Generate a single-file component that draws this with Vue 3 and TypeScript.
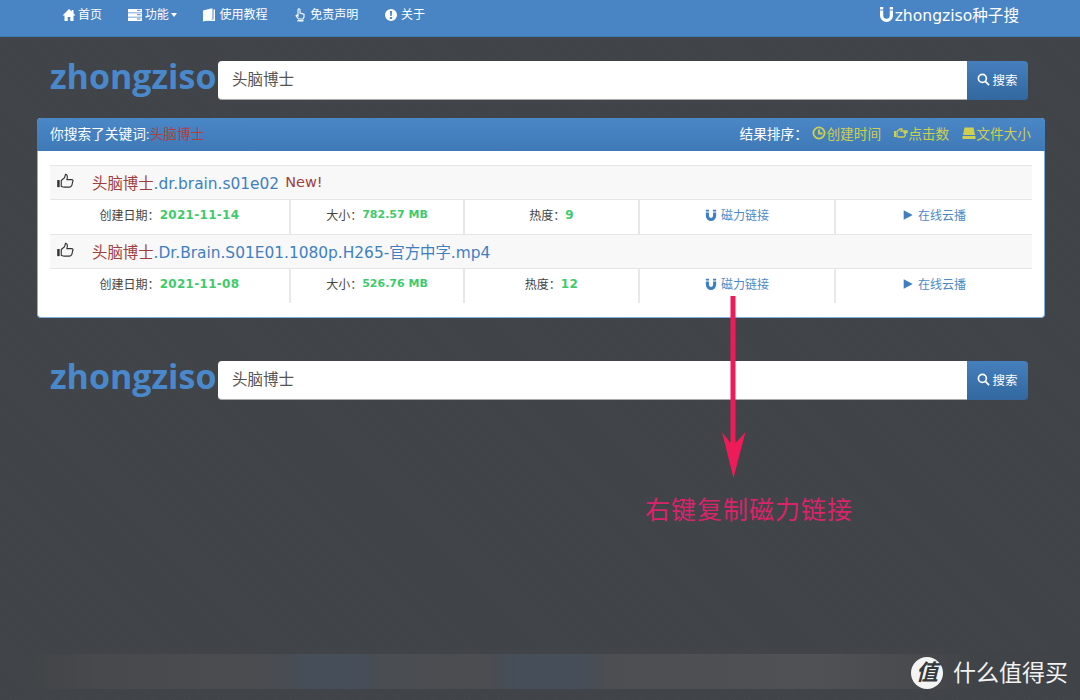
<script setup lang="ts">
interface Row {
  name: string
  isNew: boolean
  date: string
  size: string
  heat: number
}

const rows: Row[] = [
  { name: '.dr.brain.s01e02', isNew: true, date: '2021-11-14', size: '782.57 MB', heat: 9 },
  { name: '.Dr.Brain.S01E01.1080p.H265-官方中字.mp4', isNew: false, date: '2021-11-08', size: '526.76 MB', heat: 12 },
]
const keyword = '头脑博士'
</script>

<template>
  <div class="page">
    <nav class="navbar">
      <ul class="menu">
        <li>
          <svg class="ico" viewBox="0 0 14 14"><path d="M7 1 0.5 7.4h2V13h3.2V9h2.6v4h3.2V7.4h2L11.500 5.300V2h-1.800v1.500z" /></svg>首页
        </li>
        <li>
          <svg class="ico wide" viewBox="0 0 14 14"><path d="M0 1h14v3.400H0zM0 5.300h14v3.400H0zM0 9.600h14V13H0z" /><path class="cut" d="M9 2.300h3.500M9 6.700h3.500M9 11h3.500" /></svg>功能<i class="caret"></i>
        </li>
        <li>
          <svg class="ico wide" viewBox="0 0 14 14"><path d="M1 2.500 9 .5h1.500v11L1 13.500zM11.500 1.500H13v11.500H4l7.500-1.500z" /></svg>使用教程
        </li>
        <li>
          <svg class="ico wide" viewBox="0 0 14 14"><path class="line" d="M5 8V1.800a1 1 0 0 1 2 0V5l4 1.200V9l-1 2H5.500L3 7.800 4 7z" /><path d="M4.500 12h6v1.500h-6z" /></svg>免责声明
        </li>
        <li>
          <svg class="ico wide" viewBox="0 0 14 14"><path fill-rule="evenodd" d="M7 1a6 6 0 1 0 0 12A6 6 0 0 0 7 1zM5.900 3h2.200l-.4 5H6.300zM5.900 9h2.200v2H5.900z" /></svg>关于
        </li>
      </ul>
      <div class="brand">
        <svg class="brand-ico" viewBox="0 0 14 16"><path d="M0 0h3.500v2.600H0zM10.500 0H14v2.600h-3.500zM0 3.600h3.500V9a3.500 3.500 0 0 0 7 0V3.600H14V9A7 7 0 0 1 0 9z" /></svg>zhongziso种子搜
      </div>
    </nav>

    <div class="search-row">
      <div class="logo">zhongziso</div>
      <div class="search-input">{{ keyword }}</div>
      <button class="search-btn">
        <svg class="btn-ico" viewBox="0 0 14 14" fill="none"><circle cx="5.800" cy="5.800" r="4.300" /><path d="m9 9 4 4" /></svg>搜索
      </button>
    </div>

    <section class="panel">
      <header class="panel-head">
        <div>你搜索了关键词:<span class="kw">{{ keyword }}</span></div>
        <div class="sort">
          <span class="sort-label">结果排序：</span>
          <a>
            <svg class="sort-ico" viewBox="0 0 14 14" fill="none" stroke="currentColor" stroke-width="1.800"><circle cx="7" cy="7" r="5.600" /><path d="M7 3.500V7.500H10.500" /></svg>创建时间
          </a>
          <a>
            <svg class="sort-ico" viewBox="0 0 14 14" fill="none" stroke="currentColor" stroke-width="1.300"><path d="M1 5v6" stroke-width="2" /><path d="M3 5.500 6 3h2l-1 2h6v1.500H9.500a2.300 2.300 0 0 1-1 4.500H4.500L3 10.500z" /></svg>点击数
          </a>
          <a>
            <svg class="sort-ico" viewBox="0 0 14 14" fill="currentColor"><path d="M2.500 1.500h9L13 9H1z" /><path d="M.5 10h13v3H.5z" /></svg>文件大小
          </a>
        </div>
      </header>
      <div class="panel-body">
        <template v-for="row in rows" :key="row.date">
          <div class="title-row">
            <svg class="thumb" viewBox="0 0 18 16" fill="none"><path d="M1.500 7v7.500" stroke-width="2.600" /><path d="M4.500 7.500 8 4.500 9 1c1.800 0 2.500 1.500 1.500 5.500h5c1.500 0 1.800 1.500 1 2.500-.2 1-.5 3-1 4-.5 1-1 1.500-2.500 1.500H8c-1.500 0-2.500-.5-3.500-1z" stroke-width="1.200" /></svg>
            <a class="file-name"><span class="kw-dark">{{ keyword }}</span>{{ row.name }}</a>
            <span v-if="row.isNew" class="new">New!</span>
          </div>
          <div class="info-row">
            <div class="cell">创建日期：<b>{{ row.date }}</b></div>
            <div class="cell">大小：<b class="tight">{{ row.size }}</b></div>
            <div class="cell">热度：<b>{{ row.heat }}</b></div>
            <div class="cell link">
              <svg class="cell-ico" viewBox="0 0 14 14"><path d="M1 1h3.600v2H1zM9.400 1H13v2H9.400zM1 4h3.600v4a2.400 2.400 0 0 0 4.800 0V4H13v4A6 6 0 0 1 1 8z" /></svg>磁力链接
            </div>
            <div class="cell link">
              <svg class="cell-ico" viewBox="0 0 14 14"><path d="M2 1.500 12.500 7 2 12.500z" /></svg>在线云播
            </div>
          </div>
        </template>
      </div>
    </section>

    <div class="search-row second">
      <div class="logo">zhongziso</div>
      <div class="search-input">{{ keyword }}</div>
      <button class="search-btn">
        <svg class="btn-ico" viewBox="0 0 14 14" fill="none"><circle cx="5.800" cy="5.800" r="4.300" /><path d="m9 9 4 4" /></svg>搜索
      </button>
    </div>

    <!-- annotation pasted on top of the screenshot -->
    <svg class="arrow" viewBox="0 0 40 190"><path d="M17.500 0h5v147L32.500 136 20.500 182 9 136l8.500 11z" /></svg>
    <div class="note">右键复制磁力链接</div>

    <div class="blur-band"></div>
    <div class="smzdm">
      <span class="smzdm-badge">值</span>
      <span>什么值得买</span>
    </div>
  </div>
</template>

<style>
html,
body {
  margin: 0;
  background: #404347;
}
</style>

<style scoped>
.page {
  position: relative;
  height: 700px;
  overflow: hidden;
  background: #404347 repeating-linear-gradient(45deg, rgba(255, 255, 255, 0.012) 0 1px, transparent 1px 3px);
  font-family: "Liberation Sans", "Noto Sans CJK SC", sans-serif;
  color: #fff;
}

.navbar {
  display: flex;
  justify-content: space-between;
  height: 37px;
  padding: 0 61px 0 62px;
  box-sizing: border-box;
  background: #4985c5;
  border-bottom: 1px solid #3f78b4;
}
.menu {
  display: flex;
  gap: 26px;
  height: 30px;
  margin: 0;
  padding: 0;
  list-style: none;
  font-size: 12px;
  line-height: 30px;
}
.menu li {
  display: flex;
  align-items: center;
}
.menu li + li {
  margin-left: -0.3px;
}
.ico {
  width: 14px;
  height: 14px;
  margin-right: 2px;
  fill: #fff;
}
.ico.wide {
  margin-right: 3px;
}
.cut {
  fill: none;
  stroke: #4985c5;
  stroke-width: 1;
}
.ico .line {
  fill: none;
  stroke: #fff;
  stroke-width: 1.100;
}
.caret {
  width: 0;
  height: 0;
  margin-left: 2px;
  border-top: 4px solid #fff;
  border-left: 3.500px solid transparent;
  border-right: 3.500px solid transparent;
}
.brand {
  display: flex;
  align-items: center;
  height: 28px;
  font-family: "DejaVu Sans", "Noto Sans CJK SC", sans-serif;
  font-size: 15.600px;
}
.brand-ico {
  width: 13px;
  height: 15px;
  margin-right: 2px;
  fill: #fff;
}

.search-row {
  display: flex;
  align-items: center;
  height: 39px;
  margin: 24px 52px 0 50px;
}
.search-row.second {
  margin-top: 43px;
}
.logo {
  width: 168px;
  flex: none;
  margin-bottom: 8px;
  color: #4a88cc;
  font-family: "Open Sans", sans-serif;
  font-size: 34px;
  font-weight: 700;
  line-height: 39px;
}
.search-input {
  flex: 1;
  height: 39px;
  box-sizing: border-box;
  padding: 0 14px;
  background: #fff;
  border-radius: 4px 0 0 4px;
  border-bottom: 1px solid #aaa;
  color: #555;
  font-size: 15.500px;
  line-height: 37px;
}
.search-btn {
  display: flex;
  align-items: center;
  justify-content: center;
  width: 61px;
  height: 39px;
  padding: 0 0 3px;
  border: 0;
  border-radius: 0 4px 4px 0;
  background: linear-gradient(#457fbd, #33689f);
  color: #fff;
  font-family: inherit;
  font-size: 12.500px;
}
.btn-ico {
  width: 13px;
  height: 13px;
  margin-right: 2px;
  stroke: #fff;
  stroke-width: 1.800;
}

.panel {
  margin: 18px 35px 0 37px;
  border-radius: 4px;
  background: #fff;
  border: 1px solid #7fb0e0;
  border-top: 0;
}
.panel-head {
  display: flex;
  justify-content: space-between;
  align-items: center;
  height: 33px;
  margin: 0 -1px;
  padding: 0 14px 3px 13px;
  box-sizing: border-box;
  border-radius: 4px 4px 0 0;
  background: linear-gradient(#4a87c7, #3f79b7);
  font-size: 13.700px;
}
.kw {
  color: #b0403c;
}
.sort {
  display: flex;
  align-items: center;
}
.sort-label {
  margin-right: -8.500px;
}
.sort a {
  display: flex;
  align-items: center;
  margin-left: 13px;
  color: #cfcf4f;
}
.sort-ico {
  width: 14px;
  height: 14px;
}
.panel-body {
  padding: 14px 12px 14px 12px;
}
.title-row {
  display: flex;
  align-items: center;
  height: 35px;
  box-sizing: border-box;
  padding-bottom: 1px;
  border-top: 1px solid #e6e6e6;
  border-bottom: 1px solid #e6e6e6;
  background: #f8f8f8;
  font-family: "DejaVu Sans", "Noto Sans CJK SC", sans-serif;
  font-size: 15.400px;
}
.thumb {
  width: 17px;
  height: 16px;
  margin: 0 18px 2px 7px;
  flex: none;
  stroke: #333;
}
.file-name {
  color: #3f7fc1;
}
.kw-dark,
.new {
  color: #9f3f3d;
}
.new {
  margin-left: 6px;
  font-size: 14.500px;
}
.info-row {
  display: grid;
  grid-template-columns: 239px 174px 175px 196px 198px;
  height: 34px;
}
.cell {
  display: flex;
  align-items: center;
  justify-content: center;
  padding-bottom: 5px;
  border-left: 2px solid #e8e8e8;
  color: #444;
  font-size: 12px;
}
.cell:first-child {
  border-left: 0;
}
.cell b {
  color: #3fca6b;
  font-family: "DejaVu Sans", sans-serif;
  font-size: 12px;
  letter-spacing: 0.3px;
}
.cell b.tight {
  font-size: 11px;
  letter-spacing: 0;
}
.cell.link {
  color: #5088c4;
}
.cell-ico {
  width: 12px;
  height: 12px;
  margin-right: 4px;
  fill: #3f7fc1;
}

.arrow {
  position: absolute;
  left: 713px;
  top: 296px;
  width: 40px;
  height: 190px;
  fill: #ef1a58;
}
.note {
  position: absolute;
  left: 645px;
  top: 494px;
  color: #d9246b;
  font-size: 25px;
  letter-spacing: 1px;
  line-height: 32px;
  white-space: nowrap;
}
.blur-band {
  position: absolute;
  left: 35px;
  right: 0;
  top: 654px;
  height: 35px;
  background: linear-gradient(90deg, #424548 0, #47494c 6%, #4a4c4f 20%, #494d53 24%, #454e59 26%, #454e59 31%, #4a4d52 33%, #4b4d50 43%, #454e59 46%, #454e59 52%, #4c4e51 55%, #505154 75%, #484a4d 84%, #404347 90%);
}
.smzdm {
  position: absolute;
  right: 12px;
  top: 657px;
  display: flex;
  align-items: center;
  gap: 10px;
  font-size: 23px;
  line-height: 32px;
  color: #f2f2f2;
}
.smzdm-badge {
  width: 32px;
  height: 32px;
  border-radius: 50%;
  background: #f4f4f4;
  color: #36393d;
  font-size: 22px;
  font-style: italic;
  font-weight: 700;
  text-align: center;
}
</style>
